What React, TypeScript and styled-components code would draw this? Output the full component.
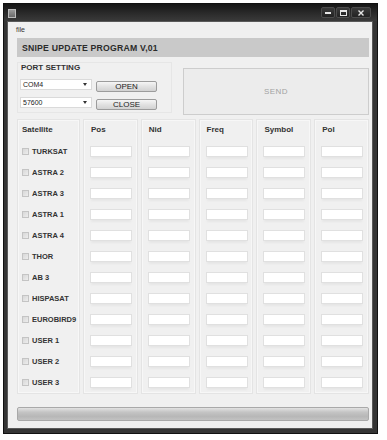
import React from "react";
import styled, { createGlobalStyle } from "styled-components";

const GlobalStyle = createGlobalStyle`
  html, body {
    margin: 0;
    padding: 0;
    background: #fff;
  }
  body {
    font-family: "Liberation Sans", Arial, sans-serif;
  }
`;

const Window = styled.div`
  box-sizing: border-box;
  margin: 3px 0 0 3px;
  width: 375px;
  height: 431px;
  background: #353535;
  border: 1px solid #111;
  padding: 0 4px 4px 3px;
  display: flex;
  flex-direction: column;
`;

const TitleBar = styled.div`
  height: 17px;
  display: flex;
  align-items: flex-start;
  background: linear-gradient(#161616, #2c2c2c 60%, #3a3a3a);
  margin: 0 -4px 0 -3px;
  padding: 0 6px 0 4px;
`;

const AppIcon = styled.div`
  width: 6px;
  height: 7px;
  margin-top: 5px;
  background: linear-gradient(#9a9a9a, #6a6a6a);
  border: 1px solid #bbb;
`;

const Spacer = styled.div`
  flex: 1;
`;

const CaptionButton = styled.div<{ $wide?: boolean }>`
  box-sizing: border-box;
  width: ${(p) => (p.$wide ? "20px" : "14px")};
  height: 11px;
  margin-top: 3px;
  margin-left: 1px;
  border: 1px solid #4c4c4c;
  border-radius: 2px;
  background: linear-gradient(#3a3a3a, #222);
  display: flex;
  align-items: center;
  justify-content: center;
`;

const Client = styled.div`
  flex: 1;
  display: flex;
  flex-direction: column;
  background: #f0f0f0;
  border: 1px solid #5a5a5a;
`;

const MenuBar = styled.div`
  height: 14px;
  display: flex;
  align-items: center;
  padding-left: 8px;
  font-size: 7px;
  color: #333;
`;

const Body = styled.div`
  flex: 1;
  display: flex;
  flex-direction: column;
  padding: 2px 3px 0 9px;
`;

const HeaderBar = styled.div`
  height: 19px;
  display: flex;
  align-items: center;
  padding-left: 5px;
  background: #c9c9c9;
  color: #2b2b2b;
  font-size: 8.7px;
  font-weight: bold;
  letter-spacing: 0.2px;
`;

const PortRow = styled.div`
  display: flex;
  align-items: flex-start;
  gap: 11px;
  height: 54px;
  margin-top: 4px;
`;

const PortGroup = styled.div`
  box-sizing: border-box;
  width: 155px;
  height: 51px;
  margin-top: 1px;
  border: 1px solid #e6e6e6;
  padding: 0 2px;
`;

const GroupLabel = styled.div`
  font-size: 8px;
  font-weight: bold;
  color: #333;
  line-height: 9px;
  padding-left: 1px;
`;

const ControlRow = styled.div<{ $first?: boolean }>`
  display: flex;
  align-items: flex-start;
  margin-top: ${(p) => (p.$first ? "7px" : "5px")};
`;

const Combo = styled.div`
  box-sizing: border-box;
  width: 72px;
  height: 11px;
  background: #fff;
  border: 1px solid #dadada;
  display: flex;
  align-items: center;
  padding: 0 4px 0 2px;
  font-size: 7px;
  color: #222;
  span {
    flex: 1;
  }
`;

const PushButton = styled.div`
  box-sizing: border-box;
  width: 61px;
  height: 11px;
  margin: 2px 0 0 4px;
  border: 1px solid #9c9c9c;
  border-radius: 2px;
  background: linear-gradient(#f6f6f6, #e2e2e2 50%, #d2d2d2);
  display: flex;
  align-items: center;
  justify-content: center;
  font-size: 8px;
  color: #222;
`;

const SendBox = styled.div`
  box-sizing: border-box;
  flex: 1;
  height: 47px;
  margin-top: 7px;
  background: #ececec;
  border: 1px solid #cdcdcd;
  display: flex;
  align-items: center;
  justify-content: center;
  font-size: 8px;
  color: #a2a2a2;
  letter-spacing: 0.4px;
`;

const Columns = styled.div`
  display: grid;
  grid-template-columns: 63px repeat(5, 1fr);
  column-gap: 3px;
  margin-top: 4px;
`;

const ColumnGroup = styled.div<{ $pad: number }>`
  box-sizing: border-box;
  border: 1px solid #e4e4e4;
  box-shadow: inset 0 0 0 1px #f7f7f7;
  padding: 3px 0 0 ${(p) => p.$pad}px;
`;

const ColumnHead = styled.div`
  height: 18px;
  line-height: 14px;
  font-size: 8px;
  font-weight: bold;
  color: #333;
  padding-left: 1px;
`;

const Row = styled.div`
  height: 21px;
  display: flex;
  align-items: center;
`;

const Field = styled.div`
  box-sizing: border-box;
  width: 42px;
  height: 11px;
  background: #fff;
  border: 1px solid #e0e0e0;
  box-shadow: 0 3px 2px -1px #e6e6e6;
`;

const Check = styled.div`
  box-sizing: border-box;
  width: 7px;
  height: 7px;
  margin-left: 1px;
  border: 1px solid #c4c4c4;
  background: linear-gradient(135deg, #d8d8d8, #ededed);
`;

const SatName = styled.span`
  margin-left: 3px;
  font-size: 7.5px;
  font-weight: bold;
  color: #333;
`;

const Progress = styled.div`
  box-sizing: border-box;
  height: 14px;
  margin-top: 13px;
  border: 1px solid #a9a9a9;
  border-radius: 2px;
  background: linear-gradient(#e2e2e2, #c4c4c4 35%, #b7b7b7 70%, #c2c2c2);
`;

const satellites = [
  "TURKSAT",
  "ASTRA 2",
  "ASTRA 3",
  "ASTRA 1",
  "ASTRA 4",
  "THOR",
  "AB 3",
  "HISPASAT",
  "EUROBIRD9",
  "USER 1",
  "USER 2",
  "USER 3",
];

const fields = ["Pos", "Nid", "Freq", "Symbol", "Pol"];

const Arrow = () => (
  <svg width="4" height="3" viewBox="0 0 4 3">
    <path d="M0 0 H4 L2 3 Z" fill="#333" />
  </svg>
);

export default function App() {
  return (
    <>
      <GlobalStyle />
      <Window>
        <TitleBar>
          <AppIcon />
          <Spacer />
          <CaptionButton>
            <svg width="6" height="3" viewBox="0 0 6 3">
              <rect x="0" y="1" width="6" height="2" fill="#e6e6e6" />
            </svg>
          </CaptionButton>
          <CaptionButton>
            <svg width="7" height="6" viewBox="0 0 7 6">
              <rect x="0.5" y="0.5" width="6" height="5" fill="none" stroke="#e6e6e6" />
              <rect x="0.5" y="0.5" width="6" height="1.5" fill="#e6e6e6" />
            </svg>
          </CaptionButton>
          <CaptionButton $wide>
            <svg width="6" height="6" viewBox="0 0 6 6">
              <path d="M0.5 0.5 L5.5 5.5 M5.5 0.5 L0.5 5.5" stroke="#e6e6e6" strokeWidth="1.4" />
            </svg>
          </CaptionButton>
        </TitleBar>
        <Client>
          <MenuBar>file</MenuBar>
          <Body>
            <HeaderBar>SNIPE UPDATE PROGRAM V,01</HeaderBar>
            <PortRow>
              <PortGroup>
                <GroupLabel>PORT SETTING</GroupLabel>
                <ControlRow $first>
                  <Combo>
                    <span>COM4</span>
                    <Arrow />
                  </Combo>
                  <PushButton>OPEN</PushButton>
                </ControlRow>
                <ControlRow>
                  <Combo>
                    <span>57600</span>
                    <Arrow />
                  </Combo>
                  <PushButton>CLOSE</PushButton>
                </ControlRow>
              </PortGroup>
              <SendBox>SEND</SendBox>
            </PortRow>
            <Columns>
              <ColumnGroup $pad={3}>
                <ColumnHead>Satellite</ColumnHead>
                {satellites.map((s) => (
                  <Row key={s}>
                    <Check />
                    <SatName>{s}</SatName>
                  </Row>
                ))}
              </ColumnGroup>
              {fields.map((f) => (
                <ColumnGroup key={f} $pad={6}>
                  <ColumnHead>{f}</ColumnHead>
                  {satellites.map((s) => (
                    <Row key={s}>
                      <Field />
                    </Row>
                  ))}
                </ColumnGroup>
              ))}
            </Columns>
            <Progress />
          </Body>
        </Client>
      </Window>
    </>
  );
}
